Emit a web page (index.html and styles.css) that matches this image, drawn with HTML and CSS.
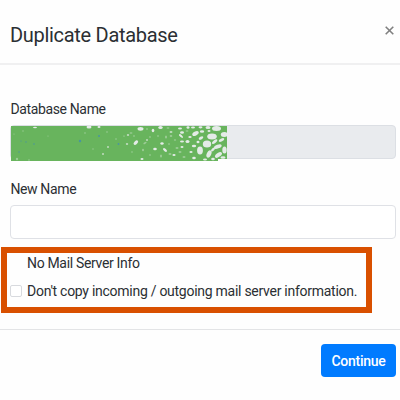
FILE: index.html
```
<!DOCTYPE html>
<html lang="en">
<head>
<meta charset="utf-8">
<title>Duplicate Database</title>
<link rel="stylesheet" href="styles.css">
</head>
<body>
<form class="modal">
  <header class="modal-header">
    <h1 class="title">Duplicate Database</h1>
    <button class="close" type="button" aria-label="Close"><svg width="9" height="9" viewBox="0 0 9 9"><path d="M.7.7 8.3 8.3M8.3.7.7 8.3"/></svg></button>
  </header>
  <main class="modal-body">
    <div class="field">
      <label class="label">Database Name</label>
      <div class="input disabled">
        <svg class="scribble" width="217" height="36" viewBox="10 125 217 36">
          <path class="ink" d="M11 126H227V159H218V161H11Z"/>
          <g class="faint">
            <circle cx="14" cy="134" r=".6"/><circle cx="23" cy="131" r=".7"/><circle cx="48" cy="136" r=".6"/><circle cx="17" cy="159" r="1.200"/><circle cx="29" cy="160" r=".8"/><circle cx="85" cy="133" r=".8"/><circle cx="93" cy="149" r=".7"/><circle cx="107" cy="132" r=".8"/><circle cx="116" cy="139" r=".8"/>
            <ellipse cx="124" cy="136" rx="1" ry=".6"/><ellipse cx="131" cy="133" rx="1.500" ry=".8"/><ellipse cx="134" cy="136" rx="1" ry=".8"/><ellipse cx="145" cy="143" rx="1.800" ry=".8" transform="rotate(-30 145 143)"/><ellipse cx="150" cy="137" rx="1" ry=".7"/><ellipse cx="143" cy="150" rx="1" ry="1.200"/><ellipse cx="158" cy="136" rx="1" ry=".8"/><ellipse cx="166" cy="137" rx="1" ry="1.500"/><ellipse cx="171" cy="136" rx="1.300" ry="1"/><ellipse cx="169" cy="144" rx="1" ry=".7"/><ellipse cx="170" cy="154" rx="1.500" ry="1"/><ellipse cx="177" cy="148" rx="1.500" ry="1"/><ellipse cx="161" cy="156" rx="1" ry="1.500"/><ellipse cx="132" cy="152" rx=".8" ry=".8"/><ellipse cx="150" cy="155" rx="1" ry=".7"/><ellipse cx="180" cy="152" rx="1.500" ry=".9"/><ellipse cx="184" cy="157" rx="1.500" ry="1"/><ellipse cx="175" cy="140" rx="1.200" ry=".8"/><ellipse cx="187" cy="131" rx="1.500" ry=".8"/><ellipse cx="147" cy="129" rx="1" ry=".7"/><ellipse cx="168" cy="128" rx="1.500" ry=".8"/>
          </g>
          <g class="gaps">
            <ellipse cx="35" cy="127.500" rx="2" ry=".8"/>
            <ellipse cx="89" cy="127" rx="2.500" ry="1.500"/>
            <ellipse cx="99" cy="127" rx="1.500" ry="1"/>
            <ellipse cx="103" cy="154" rx="1" ry=".8"/>
            <ellipse cx="108" cy="147" rx="1" ry=".7"/>
            <ellipse cx="140.500" cy="128.800" rx="3" ry="1.900"/>
            <ellipse cx="153" cy="130.500" rx="1.300" ry="1.700"/>
            <ellipse cx="160.500" cy="127.500" rx="2.200" ry="1.500"/>
            <ellipse cx="135.800" cy="142.500" rx="2.800" ry="1.600" transform="rotate(-45 136 142.500)"/>
            <ellipse cx="128" cy="135" rx="1.200" ry=".8"/>
            <ellipse cx="127" cy="144" rx="1.200" ry=".8"/>
            <ellipse cx="147" cy="140" rx="1" ry=".7"/>
            <ellipse cx="155" cy="149" rx="1.800" ry="1.200"/>
            <ellipse cx="162" cy="143.500" rx="1.700" ry="1.300"/>
            <ellipse cx="165" cy="150" rx="2.400" ry="1.200" transform="rotate(40 165 150)"/>
            <ellipse cx="142" cy="159" rx="1.500" ry=".9"/>
            <ellipse cx="171" cy="132" rx="1.500" ry=".8"/>
            <ellipse cx="174" cy="155" rx="1.600" ry="1"/>
            <ellipse cx="181" cy="136" rx="2.500" ry="1.100" transform="rotate(40 181 136)"/>
            <ellipse cx="182" cy="132.500" rx="2" ry="1.200"/>
            <ellipse cx="180" cy="128.500" rx="2" ry="1"/>
            <ellipse cx="187.500" cy="141.500" rx="2" ry="1.500"/>
            <ellipse cx="182" cy="141.500" rx="2" ry="1"/>
            <ellipse cx="182" cy="147" rx="1.500" ry="1"/>
            <ellipse cx="188" cy="127.500" rx="1.500" ry="1.200"/>
            <ellipse cx="193" cy="127.500" rx="2" ry="1"/>
            <ellipse cx="195.500" cy="133.500" rx="3.500" ry="2" transform="rotate(-30 195.500 133.500)"/>
            <ellipse cx="190" cy="137" rx="1.700" ry="1"/>
            <ellipse cx="202" cy="131.500" rx="2.200" ry="1.300"/>
            <ellipse cx="200.500" cy="127.300" rx="2" ry="1.100"/>
            <ellipse cx="208" cy="127.500" rx="2.500" ry="1.500"/>
            <ellipse cx="216.500" cy="128.500" rx="4.500" ry="2.500"/>
            <ellipse cx="209" cy="131" rx="1.500" ry=".9"/>
            <ellipse cx="212" cy="136.500" rx="4.800" ry="2.900"/>
            <ellipse cx="224.300" cy="134.500" rx="3.500" ry="2.500"/>
            <ellipse cx="201" cy="138" rx="2.500" ry="1.400" transform="rotate(-30 201 138)"/>
            <ellipse cx="207" cy="144" rx="4.200" ry="3.600"/>
            <ellipse cx="215" cy="141.500" rx="3.200" ry="1.400" transform="rotate(-40 215 142)"/>
            <ellipse cx="218" cy="146.500" rx="4" ry="1.900" transform="rotate(-20 218 147)"/>
            <ellipse cx="221.500" cy="140" rx="3" ry="1.500" transform="rotate(-25 221.500 140)"/>
            <ellipse cx="200" cy="150.500" rx="2.900" ry="4"/>
            <ellipse cx="194" cy="146" rx="2.200" ry="1.300"/>
            <ellipse cx="198" cy="142" rx="1.500" ry="1.200"/>
            <ellipse cx="191" cy="152" rx="1.600" ry="1"/>
            <ellipse cx="209" cy="154" rx="2.200" ry="3.800" transform="rotate(25 209 154)"/>
            <ellipse cx="213" cy="149.500" rx="2.400" ry="1.200" transform="rotate(-40 213 149.500)"/>
            <ellipse cx="218" cy="154.500" rx="4" ry="2" transform="rotate(-35 219 154)"/>
            <ellipse cx="224.500" cy="150" rx="2.200" ry="3.500"/>
            <ellipse cx="223" cy="157.500" rx="2.500" ry="1.200"/>
            <ellipse cx="205" cy="159.500" rx="2" ry="1"/>
            <ellipse cx="213" cy="159" rx="1.800" ry="1.200"/>
            <ellipse cx="194" cy="158" rx="1.800" ry="1.300"/>
          </g>
          <g class="specks"><circle cx="21" cy="141" r=".6"/><circle cx="26" cy="142" r=".7"/><circle cx="34" cy="144" r=".8"/><circle cx="19" cy="152" r=".7"/><circle cx="80" cy="141" r="1.200"/><circle cx="99" cy="136" r="1"/><circle cx="118.500" cy="144" r=".9"/></g>
        </svg>
      </div>
    </div>
    <div class="field">
      <label class="label" for="name">New Name</label>
      <input class="input" id="name" type="text">
    </div>
    <section class="highlight">
      <div class="option-title">No Mail Server Info</div>
      <label class="option"><input class="check" type="checkbox"><span class="option-text">Don't copy incoming / outgoing mail server information.</span></label>
    </section>
  </main>
  <footer class="modal-footer"><button class="continue" type="button">Continue</button></footer>
</form>
</body>
</html>
```

FILE: styles.css
```
* { box-sizing: border-box; }
body { margin: 0; background: #fefefe; color: #2b2f33; font: 14px/20px Roboto, "Liberation Sans", sans-serif; letter-spacing: -.27px; }
.modal { width: 400px; height: 400px; display: flex; flex-direction: column; }
.modal-header { height: 65px; flex: none; display: flex; justify-content: space-between; padding: 20px 6px 0 10px; border-bottom: 2px solid #f0f0f1; }
.title { margin: 0; font-size: 20px; line-height: 30px; font-weight: 400; letter-spacing: -.3px; }
.close { width: 9px; height: 9px; margin-top: 6px; padding: 0; border: 0; background: none; display: flex; }
.close path { fill: none; stroke: #808080; stroke-width: 1.6; }
.modal-body { height: 265px; flex: none; padding-top: 34px; border-bottom: 1px solid #e3e4e6; }
.field { height: 80px; padding: 0 4px 0 10px; }
.label { display: block; height: 26px; letter-spacing: -.36px; padding-left: .4px; }
.input { display: block; width: 100%; height: 34px; padding: 0 8px; border: 1px solid #dfe1e6; border-radius: 4px; background: #fff; font: inherit; outline: 0; }
.disabled { padding: 0; background: #e9ebee; border-color: #dcdfe4; }
.scribble { display: block; margin: -1px 0 0 -1px; }
.ink { fill: #68b45d; }
.faint { fill: #9ccc96; }
.gaps { fill: #e4ebe7; }
.specks { fill: #4a94a0; }
.highlight { width: 371px; height: 66px; margin: -12px 0 0 1px; padding: 0 0 0 3px; border: 6px solid #d95000; }
.option-title { margin-left: 17px; height: 28px; letter-spacing: -.33px; }
.option { display: flex; align-items: center; gap: 5px; height: 20px; }
.check { appearance: none; flex: none; width: 12px; height: 12px; margin: 0; border: 1px solid #d8dade; border-radius: 2px; background: #fff; }
.option-text { white-space: nowrap; }
.modal-footer { display: flex; justify-content: flex-end; padding: 14px 4px 0; }
.continue { width: 75px; height: 33px; padding: 0; border: 0; border-radius: 4px; background: #007bff; color: #fff; font: 500 14px/20px Roboto, sans-serif; letter-spacing: -.25px; }
```
